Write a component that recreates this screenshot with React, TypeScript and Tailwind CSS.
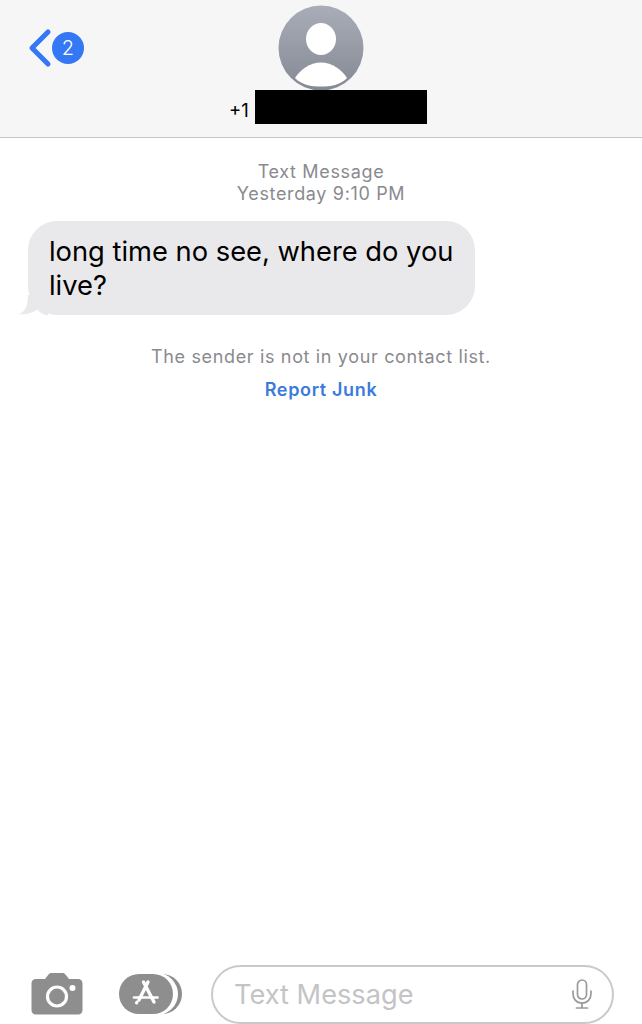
import { ChevronLeft } from "lucide-react";

const font = { sans: "font-['Inter','Liberation_Sans',sans-serif]" };

/* ── Default contact avatar ── */
function Avatar() {
  return (
    <svg width="86" height="86" viewBox="0 0 86 86" className="block">
      <defs>
        <linearGradient id="avatar-bg" x1="0" y1="0" x2="0" y2="1">
          <stop offset="0" stopColor="#a9adb8" />
          <stop offset="1" stopColor="#858993" />
        </linearGradient>
      </defs>
      <circle cx="43" cy="43" r="42.5" fill="url(#avatar-bg)" />
      <ellipse cx="43" cy="34" rx="15" ry="16" fill="#fff" />
      <path d="M17 73 C22 65 32 57.5 43 57.5 C54 57.5 64 65 69 73 C62 80 53 81.500 43 81.500 C33 81.500 24 80 17 73 Z" fill="#fff" />
    </svg>
  );
}

/* ── Camera glyph ── */
function CameraIcon() {
  return (
    <svg width="52" height="42" viewBox="0 0 52 42" className="block">
      <path
        fillRule="evenodd"
        fill="#8e8e8e"
        d="M5 6 H14 L17.5 1.5 C18.2 .6 19 0 20.5 0 H31.5 C33 0 33.800 .6 34.500 1.5 L38 6 H47 C49.800 6 51.500 7.700 51.500 10.500 V37 C51.500 39.800 49.800 41.500 47 41.500 H5 C2.200 41.500 .5 39.800 .5 37 V10.500 C.5 7.700 2.200 6 5 6 Z"
      />
      <circle cx="26" cy="23.500" r="9.500" fill="none" stroke="#fff" strokeWidth="3.200" />
      <circle cx="41.500" cy="15" r="3" fill="#fff" />
    </svg>
  );
}

/* ── App store pill with the stacked edges behind it ── */
function AppsIcon() {
  return (
    <svg width="64" height="42" viewBox="0 0 64 42" className="block">
      <rect x="20" y="1" width="43" height="40" rx="20" fill="#8e8e8e" />
      <rect x="16" y="0" width="43" height="42" rx="21" fill="#fff" />
      <rect x="0" y="1" width="54" height="40" rx="20" fill="#8e8e8e" />
      <g stroke="#fff" strokeLinecap="round" fill="none">
        <path d="M24.500 9 L35 29" strokeWidth="3.400" />
        <path d="M29 9 L20 27" strokeWidth="3.400" />
        <path d="M15 24.500 H38.500" strokeWidth="2.600" />
        <path d="M17.500 30 L18 29" strokeWidth="3" />
      </g>
    </svg>
  );
}

/* ── Dictation mic ── */
function MicIcon() {
  return (
    <svg width="20" height="30" viewBox="0 0 20 30" fill="none" stroke="#9a9a9a" strokeWidth="1.700" strokeLinecap="round" className="block">
      <rect x="5.500" y="1" width="9" height="19" rx="4.500" />
      <path d="M1 12 V14.500 C1 20 4.500 24 10 24 C15.500 24 19 20 19 14.500 V12" />
      <path d="M10 24 V29 M4.500 29 H15.500" />
    </svg>
  );
}

/* ── Received bubble tail ── */
function BubbleTail() {
  return (
    <svg width="30" height="30" viewBox="0 0 30 30" className="absolute left-[-10px] bottom-0 block">
      <path d="M0 29 C6 28.500 10 22 10 10 L30 10 V30 C25 30 22 27.500 19.500 24.500 C14 28.500 7 30 0 29 Z" fill="#e9e9eb" />
    </svg>
  );
}

export default function App() {
  return (
    <div className={`flex h-[1024px] w-[642px] flex-col overflow-hidden bg-white ${font.sans}`}>
      {/* ── Header ── */}
      <header className="h-[138px] shrink-0 border-b border-[#c6c6c8] bg-[#f6f6f6] pt-[5px]">
        <div className="flex items-center pl-[22px]">
          <div className="flex w-[256px] items-center">
            <ChevronLeft size={64} strokeWidth={1.900} className="-ml-[14.500px] -mr-[19.500px] shrink-0 text-[#3478f6]" />
            <div className="flex h-[32px] w-[32px] items-center justify-center rounded-full bg-[#3478f6] text-[20px] font-light text-white">
              2
            </div>
          </div>
          <Avatar />
        </div>
        <div className="-mt-[1px] flex items-center pl-[229px]">
          <span className="mr-[6px] pt-[6px] text-[18.500px] leading-none text-black">+1</span>
          <div className="h-[34px] w-[172px] bg-black" />
        </div>
      </header>

      {/* ── Thread ── */}
      <main className="flex flex-1 flex-col">
        <div className="mt-[23px] text-center text-[18px] leading-[22px] tracking-[0.65px] text-[#8a8a8e]">
          <p>Text Message</p>
          <p>Yesterday 9:10 PM</p>
        </div>

        <div className="relative mt-[16px] ml-[28px] w-[447px] rounded-[29px] bg-[#e9e9eb] pt-[14px] pr-[16px] pb-[12px] pl-[21px] text-[27.300px] leading-[34px] text-black">
          <BubbleTail />
          <p className="relative">long time no see, where do you live?</p>
        </div>

        <p className="mt-[31px] text-center text-[18px] leading-[22px] tracking-[0.65px] text-[#8a8a8e]">
          The sender is not in your contact list.
        </p>
        <p className="mt-[11px] text-center text-[18px] font-semibold leading-[22px] tracking-[0.65px] text-[#3a7bdc]">
          Report Junk
        </p>
      </main>

      {/* ── Input bar ── */}
      <footer className="flex h-[59px] shrink-0 items-center pl-[31px] pr-[28px] pb-[1px]">
        <CameraIcon />
        <div className="ml-[36px]">
          <AppsIcon />
        </div>
        <div className="ml-[28px] flex h-[59px] flex-1 items-center justify-between rounded-full border-2 border-[#c9c9c9] pl-[21px] pr-[20px]">
          <span className="pt-[2px] text-[27.200px] text-[#c4c4c6]">Text Message</span>
          <MicIcon />
        </div>
      </footer>
    </div>
  );
}
